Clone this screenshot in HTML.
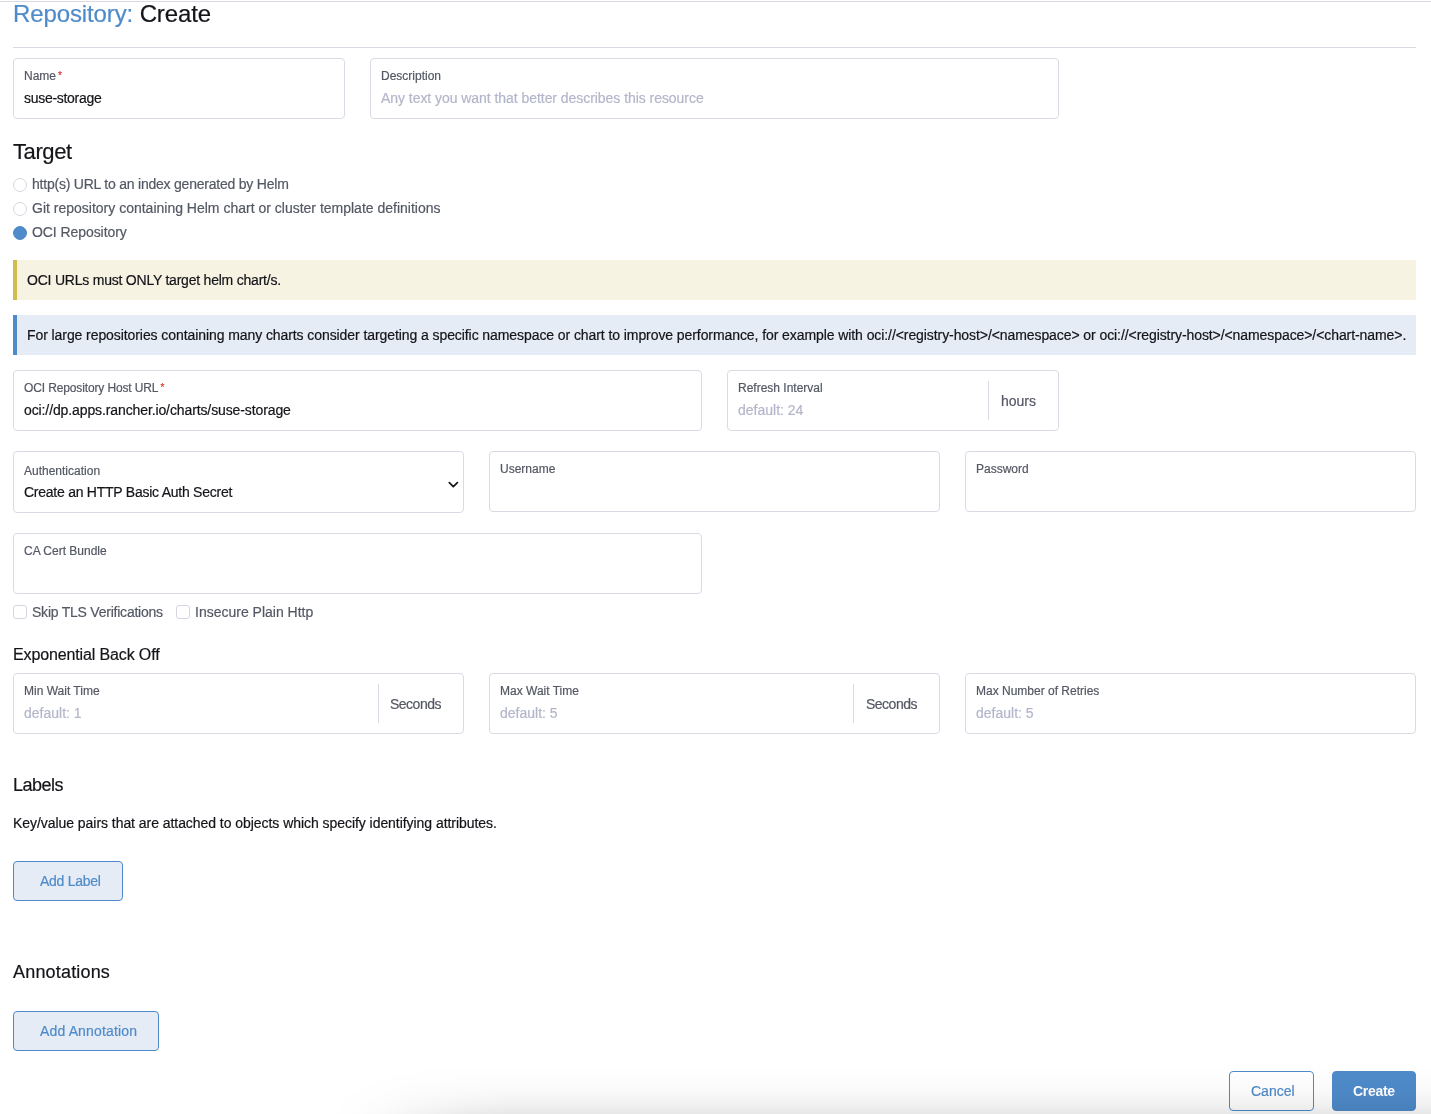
<!DOCTYPE html>
<html><head><meta charset="utf-8">
<style>
*{box-sizing:border-box;margin:0;padding:0}
html,body{width:1431px;height:1114px;overflow:hidden;background:#fff}
body{position:relative;font-family:"Liberation Sans",sans-serif;color:#141419}
.a{-webkit-text-stroke:0.2px currentColor}
.a{position:absolute;white-space:nowrap;line-height:20px}
.box{position:absolute;border:1px solid #d9dae4;border-radius:4px;background:#fff}
.lbl{font-size:12px;color:#545864}
.val{font-size:14px;color:#141419}
.ph{font-size:14px;color:#b3b6ca}
.req{color:#d63a2f;font-size:10px;position:relative;top:-1px;margin-left:2px}
.hr{position:absolute;height:1px;background:#d9dae4}
.radio{position:absolute;width:14px;height:14px;border-radius:50%;border:1px solid #d5d7e0;background:#fff}
.radio.on{background:#4f8bca;border-color:#4f8bca}
.chk{position:absolute;width:14px;height:14px;border-radius:3px;border:1px solid #d5d7e0;background:#fff}
.opt{font-size:14px;color:#545864}
.div{position:absolute;width:1px;background:#d9dae4}
.btn{position:absolute;border:1px solid #4f8bca;border-radius:4px;background:#e5ecf5}
.btxt{font-size:14px;color:#4f8bca}
</style></head><body>
<div id="root" style="position:absolute;left:0;top:0;width:1431px;height:1114px;will-change:transform">
<div class="hr" style="left:0;top:1px;width:1431px"></div>

<div class="a" style="left:13px;top:4px;font-size:24px;letter-spacing:-0.12px"><span style="color:#4f8bca">Repository:</span> Create</div>
<div class="hr" style="left:13px;top:47px;width:1403px"></div>

<!-- Name / Description -->
<div class="box" style="left:13px;top:58px;width:332px;height:61px"></div>
<div class="a lbl" style="left:24px;top:66px">Name<span class="req">*</span></div>
<div class="a val" style="left:24px;top:88px;letter-spacing:-0.29px">suse-storage</div>
<div class="box" style="left:370px;top:58px;width:689px;height:61px"></div>
<div class="a lbl" style="left:381px;top:66px">Description</div>
<div class="a ph" style="left:381px;top:88px;letter-spacing:-0.05px">Any text you want that better describes this resource</div>

<div class="a" style="left:13px;top:142px;font-size:22px;letter-spacing:-0.4px">Target</div>
<div class="radio" style="left:13px;top:178px"></div>
<div class="a opt" style="left:32px;top:174px;letter-spacing:-0.22px">http(s) URL to an index generated by Helm</div>
<div class="radio" style="left:13px;top:202px"></div>
<div class="a opt" style="left:32px;top:198px">Git repository containing Helm chart or cluster template definitions</div>
<div class="radio on" style="left:13px;top:226px"></div>
<div class="a opt" style="left:32px;top:222px;letter-spacing:-0.07px">OCI Repository</div>

<!-- Banners -->
<div style="position:absolute;left:13px;top:260px;width:1403px;height:40px;background:#f7f3e3;border-left:4px solid #d0bd4f"></div>
<div class="a val" style="left:27px;top:270px;letter-spacing:-0.22px">OCI URLs must ONLY target helm chart/s.</div>
<div style="position:absolute;left:13px;top:315px;width:1403px;height:40px;background:#e5ecf5;border-left:4px solid #4f8bca"></div>
<div class="a val" style="left:27px;top:325px;letter-spacing:-0.08px">For large repositories containing many charts consider targeting a specific namespace or chart to improve performance, for example with oci://&lt;registry-host&gt;/&lt;namespace&gt; or oci://&lt;registry-host&gt;/&lt;namespace&gt;/&lt;chart-name&gt;.</div>

<!-- OCI URL / Refresh -->
<div class="box" style="left:13px;top:370px;width:689px;height:61px"></div>
<div class="a lbl" style="left:24px;top:378px;letter-spacing:-0.13px">OCI Repository Host URL<span class="req">*</span></div>
<div class="a val" style="left:24px;top:400px;letter-spacing:-0.11px">oci://dp.apps.rancher.io/charts/suse-storage</div>
<div class="box" style="left:727px;top:370px;width:332px;height:61px"></div>
<div class="a lbl" style="left:738px;top:378px">Refresh Interval</div>
<div class="a ph" style="left:738px;top:400px">default: 24</div>
<div class="div" style="left:988px;top:381px;height:39px"></div>
<div class="a opt" style="left:1001px;top:391px">hours</div>

<!-- Auth / Username / Password -->
<div class="box" style="left:13px;top:451px;width:451px;height:62px"></div>
<div class="a lbl" style="left:24px;top:461px">Authentication</div>
<div class="a val" style="left:24px;top:482px;letter-spacing:-0.25px">Create an HTTP Basic Auth Secret</div>
<svg style="position:absolute;left:447px;top:480px" width="12" height="10" viewBox="0 0 12 10"><path d="M2.3 2.7 L6.3 6.6 L10.4 2.7" fill="none" stroke="#141419" stroke-width="1.7" stroke-linecap="round" stroke-linejoin="round"/></svg>
<div class="box" style="left:489px;top:451px;width:451px;height:61px"></div>
<div class="a lbl" style="left:500px;top:459px">Username</div>
<div class="box" style="left:965px;top:451px;width:451px;height:61px"></div>
<div class="a lbl" style="left:976px;top:459px">Password</div>

<!-- CA -->
<div class="box" style="left:13px;top:533px;width:689px;height:61px"></div>
<div class="a lbl" style="left:24px;top:541px">CA Cert Bundle</div>

<div class="chk" style="left:13px;top:605px"></div>
<div class="a opt" style="left:32px;top:602px;letter-spacing:-0.23px">Skip TLS Verifications</div>
<div class="chk" style="left:176px;top:605px"></div>
<div class="a opt" style="left:195px;top:602px">Insecure Plain Http</div>

<div class="a" style="left:13px;top:645px;font-size:16px;letter-spacing:-0.13px">Exponential Back Off</div>

<div class="box" style="left:13px;top:673px;width:451px;height:61px"></div>
<div class="a lbl" style="left:24px;top:681px">Min Wait Time</div>
<div class="a ph" style="left:24px;top:703px">default: 1</div>
<div class="div" style="left:378px;top:684px;height:39px"></div>
<div class="a opt" style="left:390px;top:694px;letter-spacing:-0.5px">Seconds</div>
<div class="box" style="left:489px;top:673px;width:451px;height:61px"></div>
<div class="a lbl" style="left:500px;top:681px">Max Wait Time</div>
<div class="a ph" style="left:500px;top:703px">default: 5</div>
<div class="div" style="left:853px;top:684px;height:39px"></div>
<div class="a opt" style="left:866px;top:694px;letter-spacing:-0.5px">Seconds</div>
<div class="box" style="left:965px;top:673px;width:451px;height:61px"></div>
<div class="a lbl" style="left:976px;top:681px">Max Number of Retries</div>
<div class="a ph" style="left:976px;top:703px">default: 5</div>

<div class="a" style="left:13px;top:775px;font-size:18px;letter-spacing:-0.5px">Labels</div>
<div class="a val" style="left:13px;top:813px;letter-spacing:-0.05px">Key/value pairs that are attached to objects which specify identifying attributes.</div>
<div class="btn" style="left:13px;top:861px;width:110px;height:40px"></div>
<div class="a btxt" style="left:40px;top:871px;letter-spacing:-0.28px">Add Label</div>

<div class="a" style="left:13px;top:962px;font-size:18px;letter-spacing:0.18px">Annotations</div>
<div class="btn" style="left:13px;top:1011px;width:146px;height:40px"></div>
<div class="a btxt" style="left:40px;top:1021px;letter-spacing:0.15px">Add Annotation</div>

<div class="btn" style="left:1229px;top:1071px;width:85px;height:40px;background:#fff"></div>
<div class="a btxt" style="left:1251px;top:1081px">Cancel</div>
<div class="btn" style="left:1332px;top:1071px;width:84px;height:40px;background:#4f8bca"></div>
<div class="a btxt" style="left:1353px;top:1081px;color:#fff;font-weight:bold;letter-spacing:-0.3px;-webkit-text-stroke:0">Create</div>

<div style="position:absolute;left:330px;top:1064px;width:1101px;height:50px;background:linear-gradient(to bottom,rgba(0,0,0,0) 0%,rgba(0,0,0,0.008) 30%,rgba(0,0,0,0.025) 55%,rgba(0,0,0,0.05) 78%,rgba(0,0,0,0.09) 100%);-webkit-mask-image:linear-gradient(to right,transparent 0,rgba(0,0,0,0.12) 40px,rgba(0,0,0,0.5) 90px,rgba(0,0,0,0.85) 140px,#000 180px)"></div>
</div>
</body></html>
